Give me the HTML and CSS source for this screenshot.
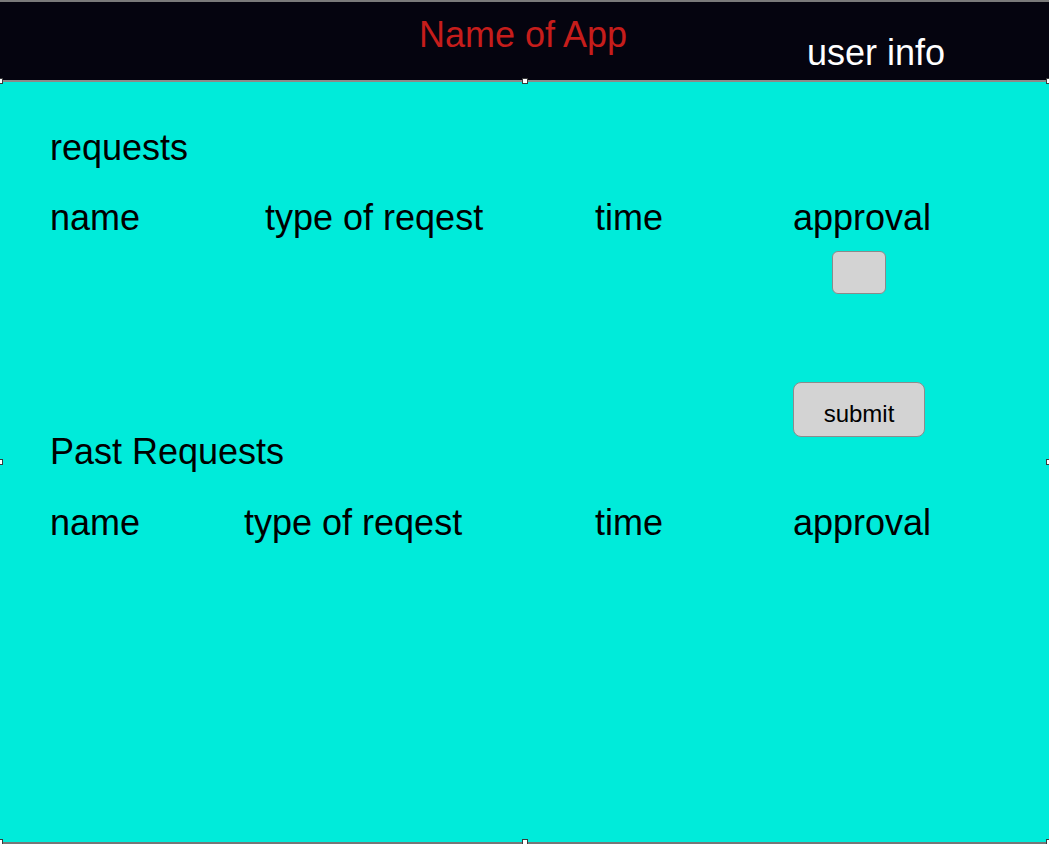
FILE: index.html
```html
<!DOCTYPE html>
<html lang="en">
<head>
<meta charset="utf-8">
<title>Name of App</title>
<link rel="stylesheet" href="styles.css">
</head>
<body>
<div class="frame">
  <header class="topbar">
    <div class="spacer"></div>
    <div class="title">Name of App</div>
    <div class="user">user info</div>
  </header>
  <main class="canvas">
    <h2 class="heading">requests</h2>
    <div class="cols cols-a">
      <span>name</span><span>type of reqest</span><span>time</span><span>approval</span>
    </div>
    <div class="cols cols-a check-row">
      <span></span><span></span><span></span>
      <span class="check-cell"><span class="checkbox"></span></span>
    </div>
    <div class="cols cols-a past-row">
      <h2 class="heading past">Past Requests</h2>
      <button class="submit" type="button">submit</button>
    </div>
    <div class="cols cols-b">
      <span>name</span><span>type of reqest</span><span>time</span><span>approval</span>
    </div>
  </main>
  <span class="handle h-tl"></span>
  <span class="handle h-tm"></span>
  <span class="handle h-tr"></span>
  <span class="handle h-ml"></span>
  <span class="handle h-mr"></span>
  <span class="handle h-bl"></span>
  <span class="handle h-bm"></span>
  <span class="handle h-br"></span>
</div>
</body>
</html>
```

FILE: styles.css
```css
html, body {
  margin: 0;
  padding: 0;
}

body {
  font-family: "Liberation Sans", Arial, Helvetica, sans-serif;
  color: #000;
  background: #ffffff;
}

.frame {
  position: relative;
  width: 1049px;
  height: 844px;
  overflow: hidden;
}

.topbar {
  box-sizing: border-box;
  height: 82px;
  background: #05040f;
  border-top: 2px solid #7a7a7a;
  border-bottom: 2px solid #8a8a8a;
  display: grid;
  grid-template-columns: 1fr auto 1fr;
  align-items: start;
}

.title {
  color: #c61d1b;
  font-size: 36px;
  line-height: 40px;
  margin-top: 13px;
  margin-right: 3px;
  white-space: nowrap;
}

.user {
  color: #ffffff;
  font-size: 36px;
  line-height: 40px;
  margin-top: 31px;
  margin-left: 177px;
  white-space: nowrap;
}

.canvas {
  box-sizing: border-box;
  height: 762px;
  background: #00ebda;
  border-bottom: 2px solid #777777;
  padding: 46px 0 0 50px;
}

.heading {
  margin: 0;
  font-size: 36px;
  line-height: 40px;
  font-weight: normal;
}

.cols {
  display: grid;
  font-size: 36px;
  line-height: 40px;
  white-space: nowrap;
}

.cols-a {
  grid-template-columns: 215px 330px 198px 1fr;
  margin-top: 30px;
}

.cols-b {
  grid-template-columns: 194px 351px 198px 1fr;
  margin-top: 31px;
}

.check-row {
  margin-top: 13px;
}

.check-cell {
  display: flex;
  padding-left: 39px;
}

.checkbox {
  box-sizing: border-box;
  width: 54px;
  height: 43px;
  background: #d3d3d3;
  border: 1px solid #8a8a8a;
  border-radius: 6px;
}

.past-row {
  margin-top: 88px;
  align-items: start;
}

.past {
  grid-column: 1 / 4;
  margin-top: 50px;
}

.submit {
  box-sizing: border-box;
  width: 132px;
  height: 55px;
  padding: 8px 0 0;
  background: #d3d3d3;
  border: 1px solid #8c8c8c;
  border-radius: 8px;
  font-family: "Liberation Sans", Arial, Helvetica, sans-serif;
  font-size: 24px;
  line-height: 28px;
  color: #000;
}

.handle {
  position: absolute;
  box-sizing: border-box;
  width: 6px;
  height: 6px;
  background: #ffffff;
  border: 1px solid #3a3a3a;
}

.h-tl { left: -3px; top: 78px; }
.h-tm { left: 522px; top: 78px; }
.h-tr { left: 1046px; top: 78px; }
.h-ml { left: -3px; top: 459px; }
.h-mr { left: 1046px; top: 459px; }
.h-bl { left: -3px; top: 839px; }
.h-bm { left: 522px; top: 839px; }
.h-br { left: 1046px; top: 839px; }
```
